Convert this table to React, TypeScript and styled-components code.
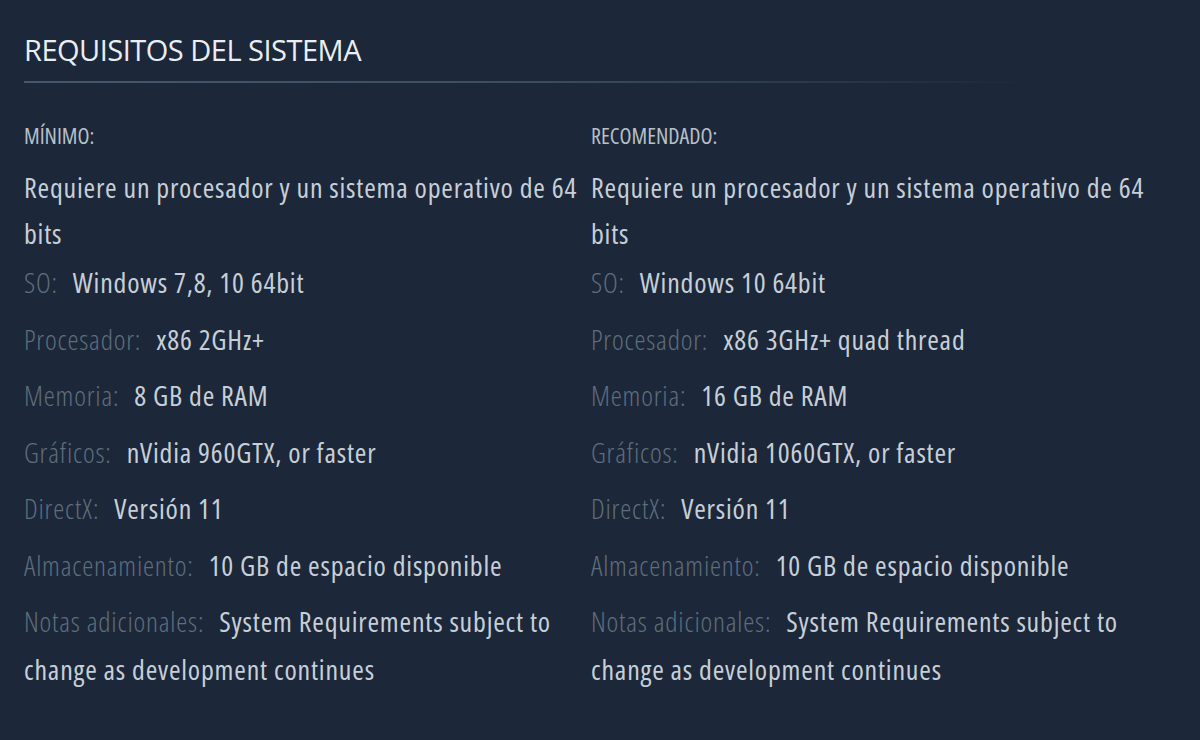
import styled, { createGlobalStyle } from "styled-components";

const Global = createGlobalStyle`
  body {
    margin: 0;
    background: #1c2739;
    font-family: "Open Sans", "Noto Sans", sans-serif;
  }
`;

const Page = styled.section`
  padding: 30px 0 0 24px;
  min-height: 740px;
  box-sizing: border-box;
`;

const Title = styled.h2`
  margin: 0;
  font-size: 29px;
  font-weight: 400;
  letter-spacing: -0.5px;
  line-height: 40px;
  color: #eaeef2;
  text-transform: uppercase;
`;

const Divider = styled.div`
  margin-top: 11px;
  width: 1016px;
  height: 2px;
  background: linear-gradient(
    to right,
    #44596d 0%,
    #3a4e62 50%,
    rgba(58, 78, 98, 0) 100%
  );
`;

const Columns = styled.div`
  display: grid;
  grid-template-columns: 567px 567px;
  margin-top: 37px;
`;

const Column = styled.div``;

const ColumnTitle = styled.div`
  font-size: 22px;
  font-stretch: 75%;
  line-height: 30px;
  color: #b7c0c9;
  text-transform: uppercase;
  margin-bottom: 14px;
`;

const List = styled.ul`
  margin: 0;
  padding: 0;
  list-style: none;
`;

const Item = styled.li<{ $note?: boolean }>`
  font-size: 28px;
  font-stretch: 75%;
  letter-spacing: 0.8px;
  line-height: ${(p) => (p.$note ? "46px" : "48px")};
  margin-bottom: ${(p) => (p.$note ? "2px" : "8.5px")};
  color: #c6cfd8;
`;

const Label = styled.strong`
  font-weight: 300;
  color: #5f6e7d;
  margin-right: 9px;
`;

type Spec = { label: string; value: string };

type Tier = { title: string; specs: Spec[] };

const tiers: Tier[] = [
  {
    title: "Mínimo:",
    specs: [
      { label: "SO:", value: "Windows 7,8, 10 64bit" },
      { label: "Procesador:", value: "x86 2GHz+" },
      { label: "Memoria:", value: "8 GB de RAM" },
      { label: "Gráficos:", value: "nVidia 960GTX, or faster" },
      { label: "DirectX:", value: "Versión 11" },
      { label: "Almacenamiento:", value: "10 GB de espacio disponible" },
      {
        label: "Notas adicionales:",
        value: "System Requirements subject to change as development continues",
      },
    ],
  },
  {
    title: "Recomendado:",
    specs: [
      { label: "SO:", value: "Windows 10 64bit" },
      { label: "Procesador:", value: "x86 3GHz+ quad thread" },
      { label: "Memoria:", value: "16 GB de RAM" },
      { label: "Gráficos:", value: "nVidia 1060GTX, or faster" },
      { label: "DirectX:", value: "Versión 11" },
      { label: "Almacenamiento:", value: "10 GB de espacio disponible" },
      {
        label: "Notas adicionales:",
        value: "System Requirements subject to change as development continues",
      },
    ],
  },
];

export default function App() {
  return (
    <>
      <Global />
      <Page>
        <Title>Requisitos del sistema</Title>
        <Divider />
        <Columns>
          {tiers.map((tier) => (
            <Column key={tier.title}>
              <ColumnTitle>{tier.title}</ColumnTitle>
              <List>
                <Item $note>
                  Requiere un procesador y un sistema operativo de 64 bits
                </Item>
                {tier.specs.map((spec) => (
                  <Item key={spec.label}>
                    <Label>{spec.label}</Label> {spec.value}
                  </Item>
                ))}
              </List>
            </Column>
          ))}
        </Columns>
      </Page>
    </>
  );
}
